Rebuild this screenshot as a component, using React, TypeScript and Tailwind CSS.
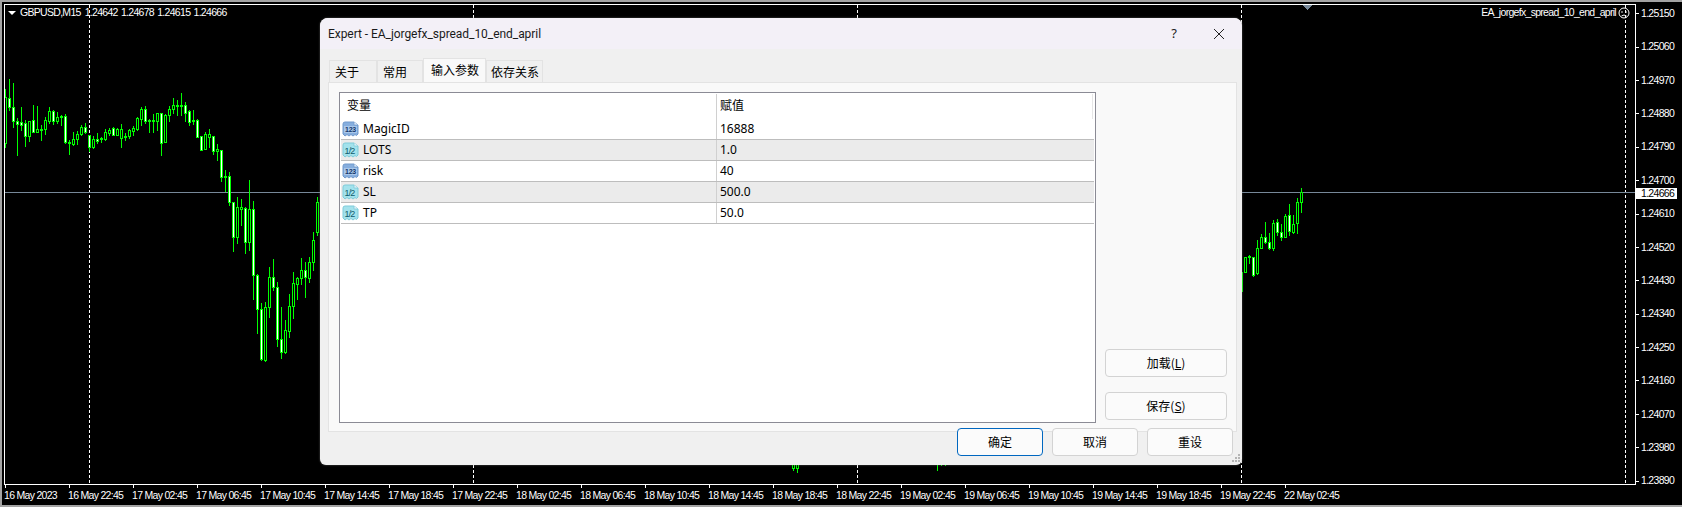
import { useMemo } from 'react';

// [high, low, body top, body bottom, filled]  x = 5 + 4 * index
const left: number[][] = [
  [89,147,97,143,0],[79,110,98,107,1],[83,127,107,121,1],[118,155,121,124,1],[107,130,122,125,1],
  [120,146,123,136,1],[121,141,121,136,0],[105,132,120,132,1],[106,132,129,132,0],[125,140,129,130,0],
  [117,134,120,129,0],[107,123,111,121,0],[110,124,111,121,1],[112,123,117,121,0],[115,125,116,117,0],
  [114,143,116,142,1],[140,154,142,143,0],[132,145,139,144,0],[131,144,134,139,0],[125,135,127,134,0],
  [123,133,127,132,1],[135,151,135,147,1],[136,148,139,147,0],[133,143,139,141,1],[137,142,138,139,0],
  [129,140,132,139,0],[128,135,130,133,0],[127,135,128,135,1],[128,135,129,135,0],[124,147,129,138,0],
  [133,140,136,137,0],[129,138,130,136,0],[126,135,128,131,0],[117,130,118,129,0],[107,125,109,119,0],
  [106,123,109,121,1],[119,132,120,121,0],[114,132,120,121,0],[113,130,113,121,0],[113,155,113,143,1],
  [114,142,115,142,0],[106,121,109,115,0],[98,113,105,109,0],[100,115,105,106,0],[93,115,105,106,0],
  [102,121,105,113,1],[110,125,111,122,1],[110,124,120,121,0],[119,137,120,137,1],[136,150,136,150,1],
  [132,149,134,149,0],[129,147,134,137,0],[136,154,136,151,1],[144,160,149,151,0],[150,181,150,177,1],
  [170,191,176,177,0],[172,205,176,202,1],[202,251,202,237,1],[197,243,207,237,0],[199,225,207,209,0],
  [207,253,208,242,1],[180,250,209,242,0],[201,299,209,275,1],[274,333,275,309,1],[303,360,309,359,1],
  [302,361,307,360,0],[267,317,277,307,0],[259,290,277,287,1],[282,346,287,339,1],[307,358,339,352,1],
  [320,353,330,352,0],[294,337,306,331,0],[272,318,283,306,0],[277,299,278,284,0],[258,284,270,278,0],
  [262,297,270,277,1],[257,282,262,278,0],[232,270,240,262,0],[197,235,202,232,0],
];

const right: number[][] = [
  [272,291,272,291,0],[257,272,257,272,0],[255,263,256,257,0],[257,276,257,275,1],[240,274,248,273,0],
  [234,248,237,248,0],[222,243,237,242,1],[233,249,242,248,1],[220,250,223,248,0],[219,235,222,232,1],
  [224,240,232,237,1],[214,237,216,237,0],[204,235,215,231,1],[215,233,224,232,0],[198,233,202,223,0],
  [188,212,192,202,0],
];

const stubs = [
  [197,460,470,460,468,0],[198,460,472,460,468,0],[233,460,470,460,461,0],[234,460,465,460,461,0],[235,460,465,460,461,0],
];

const times = [
  '16 May 2023','16 May 22:45','17 May 02:45','17 May 06:45','17 May 10:45','17 May 14:45','17 May 18:45','17 May 22:45',
  '18 May 02:45','18 May 06:45','18 May 10:45','18 May 14:45','18 May 18:45','18 May 22:45','19 May 02:45','19 May 06:45',
  '19 May 10:45','19 May 14:45','19 May 18:45','19 May 22:45','22 May 02:45',
];

const prices = [
  '1.25150','1.25060','1.24970','1.24880','1.24790','1.24700','1.24610','1.24520','1.24430','1.24340','1.24250','1.24160','1.24070','1.23980','1.23890',
];

const params = [
  { name: 'MagicID', value: '16888', kind: 'int' },
  { name: 'LOTS', value: '1.0', kind: 'float' },
  { name: 'risk', value: '40', kind: 'int' },
  { name: 'SL', value: '500.0', kind: 'float' },
  { name: 'TP', value: '50.0', kind: 'float' },
];

const chartFont = "font-['Liberation_Sans',sans-serif] text-[10.5px] tracking-[-0.7px]";
const uiFont = "font-['Noto_Sans','Noto_Sans_CJK_SC',sans-serif]";
const cjkFont = "font-['Noto_Sans_CJK_SC','Noto_Sans',sans-serif]";

function Candle({ i, c }: { i: number; c: number[] }) {
  const [high, low, top, bottom, filled] = c;
  const x = 5 + 4 * i;
  const h = bottom - top + 1;
  return (
    <g>
      <rect x={x} y={high} width={1} height={low - high + 1} fill="#00ff00" />
      <rect x={x - 1} y={top} width={3} height={h} fill="#00ff00" />
      {h > 2 && <rect x={x} y={top + 1} width={1} height={h - 2} fill={filled ? '#ffffff' : '#000000'} />}
    </g>
  );
}

function Chart() {
  const separators = useMemo(() => [89, 473, 857, 1241, 1625], []);
  return (
    <svg className="absolute inset-0" width={1630} height={479} viewBox="5 5 1630 479" shapeRendering="crispEdges">
      {separators.map((x) => (
        <line key={x} x1={x + 0.5} x2={x + 0.5} y1={5} y2={484} stroke="#ffffff" strokeDasharray="3 2" />
      ))}
      <rect x={5} y={192} width={1630} height={1} fill="#778899" />
      {left.map((c, i) => (
        <Candle key={i} i={i} c={c} />
      ))}
      {right.map((c, i) => (
        <Candle key={i} i={309 + i} c={c} />
      ))}
      {stubs.map(([i, ...c]) => (
        <Candle key={i} i={i} c={c} />
      ))}
      <polygon points="1302,5 1312,5 1307,10" fill="#778899" />
    </svg>
  );
}

function ParamIcon({ kind }: { kind: string }) {
  const isInt = kind === 'int';
  return (
    <svg width={17} height={16} viewBox="0 0 17 16" className="shrink-0">
      <path
        d="M1 3 Q1 1 3 1 H12 L16 4 V13 L14.5 14.5 L13 13.5 L11 15 L9 13.5 L7 15 L5 13.5 L3 15 L1 13 Z"
        fill={isInt ? '#86aede' : '#a3e2ec'}
        stroke={isInt ? '#7199cc' : '#7fcbd9'}
        strokeWidth={1}
      />
      <path d="M12 1 V4 H16" fill="#e8f2fa" stroke={isInt ? '#7199cc' : '#7fcbd9'} strokeWidth={0.8} />
      {isInt && <rect x={2} y={5} width={13} height={7} fill="#a9c7ea" />}
      <text
        x={isInt ? 8.5 : 7.5}
        y={isInt ? 11 : 11.5}
        textAnchor="middle"
        fontFamily="Liberation Sans, sans-serif"
        fontSize={isInt ? 7 : 9}
        fontWeight={isInt ? 700 : 400}
        letterSpacing={isInt ? -0.2 : -0.8}
        fill={isInt ? '#16386b' : '#0f5b6d'}
      >
        {isInt ? '123' : '1/2'}
      </text>
    </svg>
  );
}

function Tab({ label, width, pad, active }: { label: string; width: string; pad: string; active?: boolean }) {
  return (
    <div
      className={`${width} ${pad} flex items-center border border-b-0 border-[#e3e3e3] text-[12px] text-black ${
        active ? 'h-[24px] bg-[#f9f9f9] pb-[2px]' : 'h-[22px] bg-[#f0f0f0]'
      }`}
    >
      {label}
    </div>
  );
}

function DialogButton({ children, width, primary }: { children: React.ReactNode; width: string; primary?: boolean }) {
  return (
    <button
      className={`${width} h-[28px] rounded-[4px] bg-[#fbfbfb] text-[12px] text-black ${
        primary ? 'border-[1.5px] border-[#0067c0]' : 'border border-[#d3d3d3]'
      }`}
    >
      {children}
    </button>
  );
}

function ExpertDialog() {
  return (
    <div
      className={`${uiFont} absolute left-[318px] top-[16px] flex h-[447px] w-[922px] flex-col rounded-t-[8px] rounded-b-[6px] bg-[#f0f0f0] shadow-[0_0_2px_rgba(120,120,120,0.8)]`}
    >
      <div className="flex h-[31px] shrink-0 items-center rounded-t-[8px] bg-[#f3f0f7] pl-[8px] pr-[17px]">
        <span className="flex-1 font-['Roboto',sans-serif] text-[12px] tracking-[-0.05px] text-[#1a1a1a]">Expert - EA_jorgefx_spread_10_end_april</span>
        <span className="mr-[36px] text-[13px] text-[#222]">?</span>
        <svg width={12} height={12} viewBox="0 0 12 12">
          <path d="M1 1 L11 11 M11 1 L1 11" stroke="#222" strokeWidth={1} />
        </svg>
      </div>

      <div className="flex flex-1 flex-col pl-[8px] pr-[5px] pt-[9px]">
        <div className={`${cjkFont} ml-px flex h-[24px] items-end`}>
          <Tab label="关于" width="w-[48px]" pad="pl-[5px]" />
          <Tab label="常用" width="w-[46px]" pad="pl-[5px]" />
          <Tab label="输入参数" width="w-[63px]" pad="pl-[7px]" active />
          <Tab label="依存关系" width="w-[57px]" pad="pl-[4px]" />
        </div>

        <div className="flex h-[350px] gap-[9px] border border-[#e3e3e3] bg-[#f9f9f9] pb-[8px] pl-[10px] pr-[9px] pt-[9px]">
          <div className="flex-1 border border-[#8b8b95] bg-white p-px">
            <div className={`${cjkFont} flex h-[25px] items-center text-[12px] text-black`}>
              <div className="h-full w-[376px] border-r border-[#d0d0d0] pl-[6px] leading-[22px]">变量</div>
              <div className="h-full flex-1 border-r border-[#e6e6e6] pl-[3px] leading-[22px]">赋值</div>
              <div className="w-px" />
            </div>
            {params.map((p, i) => (
              <div
                key={p.name}
                className={`flex h-[21px] items-center border-b border-[#bdbdbd] text-[12px] text-black ${
                  i % 2 === 1 ? 'bg-[#ebebeb]' : 'bg-white'
                }`}
              >
                <div className="flex h-full w-[376px] items-center gap-[4px] border-r border-[#d0d0d0] pl-px">
                  <ParamIcon kind={p.kind} />
                  <span>{p.name}</span>
                </div>
                <div className="pl-[3px]">{p.value}</div>
              </div>
            ))}
          </div>

          <div className={`${cjkFont} flex w-[122px] flex-col justify-end gap-[15px] pb-[3px]`}>
            <DialogButton width="w-full">
              加载(<span className="underline">L</span>)
            </DialogButton>
            <DialogButton width="w-full">
              保存(<span className="underline">S</span>)
            </DialogButton>
          </div>
        </div>

        <div className={`${cjkFont} relative -mt-[4px] flex justify-end gap-[9px] pr-[4px]`}>
          <DialogButton width="w-[86px]" primary>
            确定
          </DialogButton>
          <DialogButton width="w-[86px]">取消</DialogButton>
          <DialogButton width="w-[86px]">重设</DialogButton>
        </div>
      </div>

      {/* resize grip */}
      <svg className="absolute bottom-[2px] right-[1px]" width={9} height={9} viewBox="0 0 9 9" shapeRendering="crispEdges">
        {[[6, 0], [3, 3], [6, 3], [0, 6], [3, 6], [6, 6]].map(([x, y]) => (
          <rect key={`${x}-${y}`} x={x} y={y} width={2} height={2} fill="#b4b4b4" />
        ))}
      </svg>
    </div>
  );
}

export default function App() {
  return (
    <div className="relative h-[507px] w-[1682px] overflow-hidden border-b-2 border-l-2 border-t-2 border-[#a3a3a3] bg-black pl-[2px] pt-[2px] text-white">
      <div className="flex h-[481px]">
        <div className="relative h-[481px] w-[1632px] shrink-0 border border-white">
          <Chart />
          <div className={`${chartFont} absolute left-[3px] top-[1px] flex h-[14px] items-center`}>
            <svg width={8} height={4} viewBox="0 0 8 4" className="mr-[4px]">
              <polygon points="0,0 8,0 4,4" fill="#ffffff" />
            </svg>
            <span>GBPUSD,M15</span>
            <span className="ml-[4px] whitespace-pre [word-spacing:1px]">1.24642 1.24678 1.24615 1.24666</span>
          </div>
          <div className={`${chartFont} absolute right-[5px] top-[1px] flex h-[14px] items-center gap-[2px]`}>
            <span>EA_jorgefx_spread_10_end_april</span>
            <svg width={12} height={12} viewBox="0 0 12 12">
              <circle cx={6} cy={6} r={5} fill="none" stroke="#fff" />
              <circle cx={4} cy={5} r={0.8} fill="#fff" />
              <circle cx={8} cy={5} r={0.8} fill="#fff" />
              <path d="M3.5 9 Q6 7 8.5 9" fill="none" stroke="#fff" />
            </svg>
          </div>
        </div>

        <div className={`${chartFont} -mt-[7px] flex flex-col`}>
          {prices.map((p) => (
            <div key={p} className="flex h-[33.4px] shrink-0 items-center">
              <div className="h-px w-[3px] bg-white" />
              <span className="ml-[2px]">{p}</span>
            </div>
          ))}
        </div>
      </div>

      <div className={`${chartFont} flex pl-px`}>
        {times.map((t) => (
          <div key={t} className="flex w-[64px] shrink-0 flex-col">
            <div className="h-[3px] w-px bg-white" />
            <span className="-ml-px whitespace-nowrap leading-[14px]">{t}</span>
          </div>
        ))}
      </div>

      <div className={`${chartFont} absolute left-[1634px] top-[186px] flex h-[11px] w-[41px] items-center bg-white pl-[5px] text-black`}>
        1.24666
      </div>

      <ExpertDialog />
    </div>
  );
}
